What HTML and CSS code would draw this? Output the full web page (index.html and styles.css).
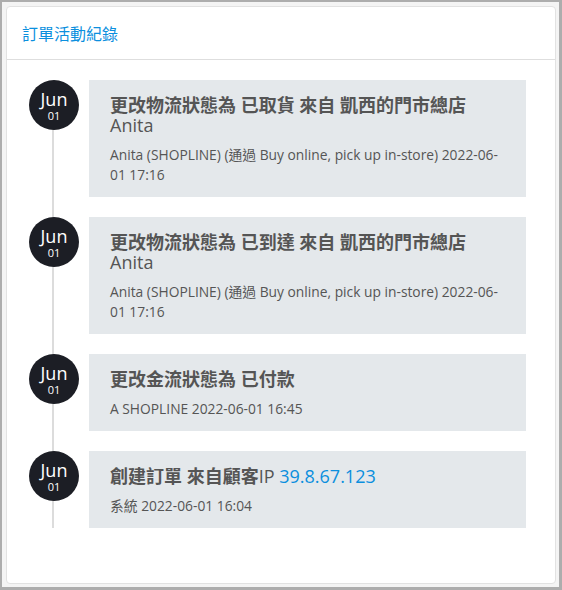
FILE: index.html
```html
<!DOCTYPE html>
<html lang="zh-Hant">
<head>
    <meta charset="UTF-8">
    <meta name="viewport" content="width=device-width, initial-scale=1.0">
    <title>訂單活動紀錄</title>
    <link rel="stylesheet" href="styles.css">
</head>
<body>
    <div class="card">
        <div class="card-header">訂單活動紀錄</div>
        <div class="timeline">
            <div class="item">
                <div class="date"><span class="month">Jun</span><span class="day">01</span></div>
                <div class="entry">
                    <div class="title"><b>更改物流狀態為 已取貨 來自 凱西的門市總店</b> Anita</div>
                    <div class="meta">Anita (SHOPLINE) (通過 Buy online, pick up in-store) 2022-06-01 17:16</div>
                </div>
            </div>
            <div class="item">
                <div class="date"><span class="month">Jun</span><span class="day">01</span></div>
                <div class="entry">
                    <div class="title"><b>更改物流狀態為 已到達 來自 凱西的門市總店</b> Anita</div>
                    <div class="meta">Anita (SHOPLINE) (通過 Buy online, pick up in-store) 2022-06-01 17:16</div>
                </div>
            </div>
            <div class="item">
                <div class="date"><span class="month">Jun</span><span class="day">01</span></div>
                <div class="entry">
                    <div class="title"><b>更改金流狀態為 已付款</b></div>
                    <div class="meta">A SHOPLINE 2022-06-01 16:45</div>
                </div>
            </div>
            <div class="item">
                <div class="date"><span class="month">Jun</span><span class="day">01</span></div>
                <div class="entry">
                    <div class="title"><b>創建訂單 來自顧客</b>IP <a href="#" class="ip">39.8.67.123</a></div>
                    <div class="meta">系統 2022-06-01 16:04</div>
                </div>
            </div>
        </div>
    </div>
</body>
</html>
```
FILE: styles.css
```css
html, body {
    height: 100%;
}
body {
    margin: 0;
    box-sizing: border-box;
    border: 2px solid #adadad;
    border-right-width: 3px;
    border-bottom-width: 3px;
    background: #f4f4f4;
    padding: 4px 3px 3px 4px;
    font-family: "Open Sans", "Noto Sans CJK TC", sans-serif;
    color: #555;
}
.card {
    box-sizing: border-box;
    height: 100%;
    background: white;
    border: 1px solid #e2e2e2;
    border-radius: 4px;
}
.card-header {
    height: 52px;
    display: flex;
    align-items: center;
    padding: 0 15px;
    border-bottom: 1px solid #dedede;
    font-size: 16px;
    color: #0b8fde;
}
.timeline {
    position: relative;
    display: flex;
    flex-direction: column;
    gap: 20px;
    margin: 20px 29px 0 22px;
}
.timeline::before {
    content: "";
    position: absolute;
    left: 23px;
    top: 25px;
    bottom: 0;
    width: 2px;
    background: #dcdcdc;
}
.item {
    display: flex;
    gap: 10px;
}
.date {
    position: relative;
    flex: none;
    width: 50px;
    height: 50px;
    border-radius: 50%;
    background: #1c1e25;
    color: white;
    display: flex;
    flex-direction: column;
    align-items: center;
    justify-content: center;
}
.month {
    font-size: 18px;
    line-height: 20px;
}
.day {
    font-size: 11px;
    line-height: 13px;
}
.entry {
    flex: 1;
    background: #e4e8eb;
    padding: 15px 21px 12px;
}
.title {
    font-size: 18px;
    line-height: 20px;
    margin-bottom: 10px;
}
.title b {
    font-weight: bold;
}
.ip {
    color: #0b8fde;
    text-decoration: none;
}
.meta {
    font-size: 13.8px;
    line-height: 20px;
}
```
